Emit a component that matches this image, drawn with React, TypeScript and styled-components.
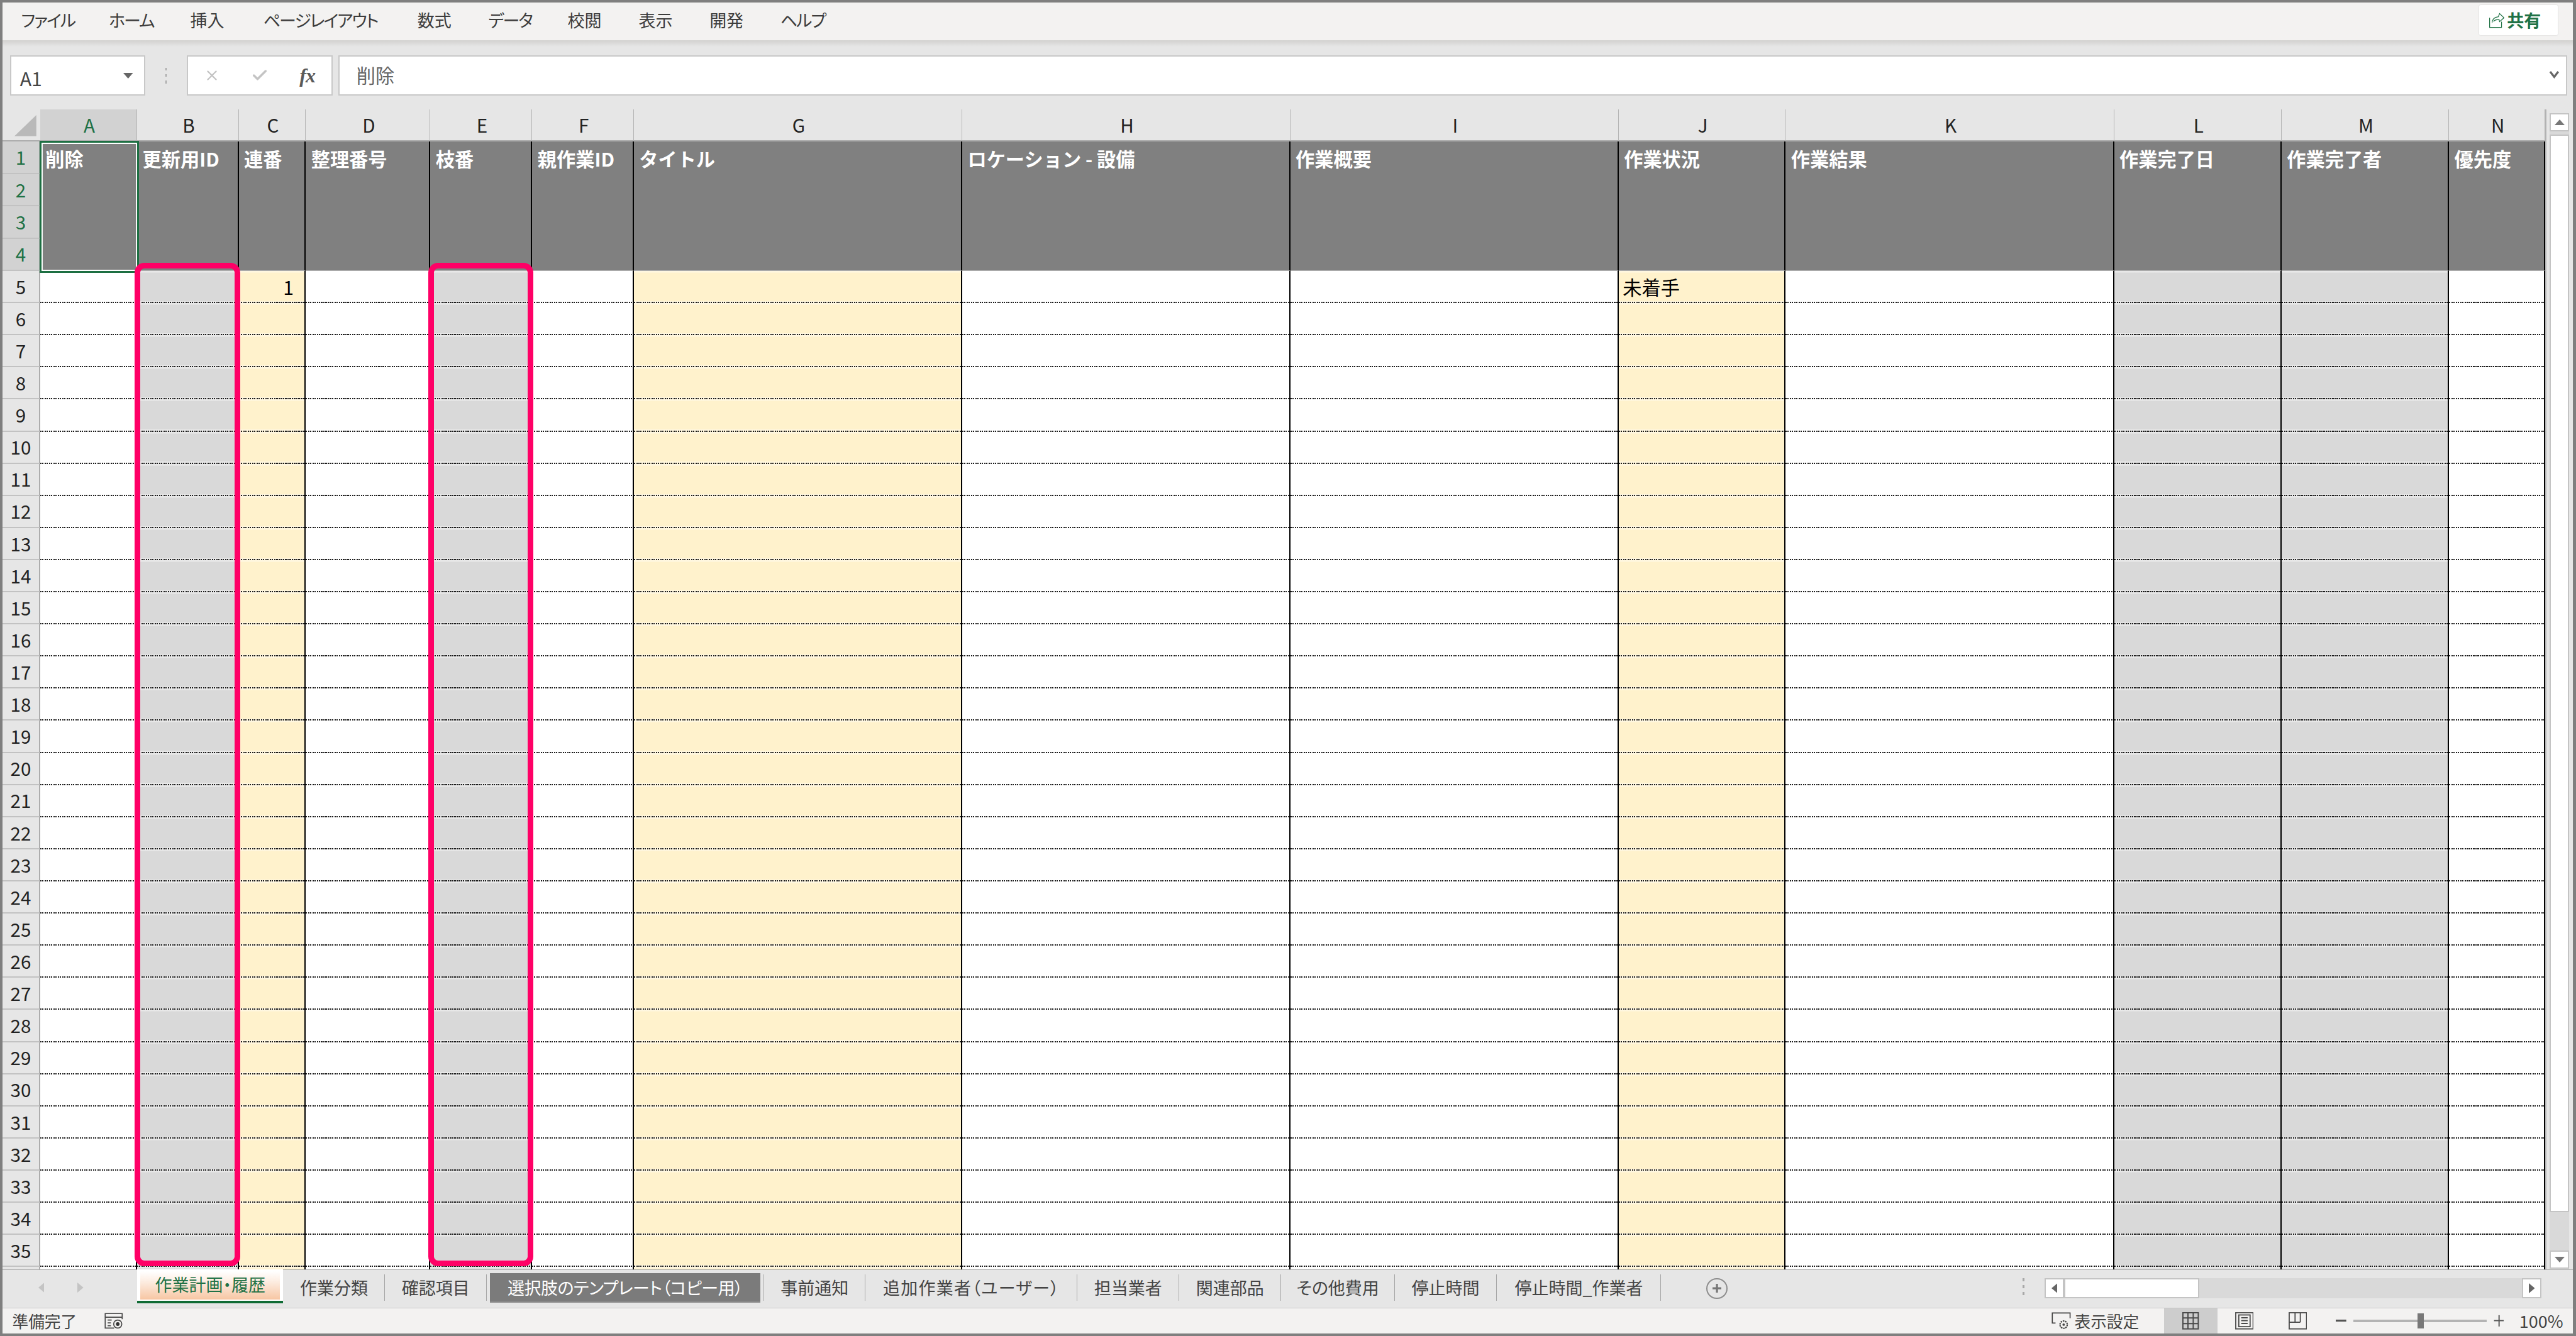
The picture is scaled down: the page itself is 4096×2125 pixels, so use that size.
import React from "react";
import styled, { createGlobalStyle } from "styled-components";
import { X, Check } from "lucide-react";

// all measurements are taken from the 6369px wide reference
const S = 4096 / 6369;
const u = (n: number) => `${(n * S).toFixed(2)}px`;

const FONT = `"Noto Sans CJK JP", "Noto Sans", sans-serif`;
const GREEN = "#1f7145";
const GRAY_CELL = "#d9d9d9";
const YELLOW_CELL = "#fff2cc";
const CHROME = "#e6e6e6";
const BAR = "#f3f2f1";

type CellKind = "white" | "gray" | "yellow";

const MENU = [
  { label: "ファイル", w: 217, kana: true },
  { label: "ホーム", w: 201, kana: true },
  { label: "挿入", w: 181 },
  { label: "ページレイアウト", w: 381, kana: true },
  { label: "数式", w: 175 },
  { label: "データ", w: 196, kana: true },
  { label: "校閲", w: 176 },
  { label: "表示", w: 175 },
  { label: "開発", w: 175 },
  { label: "ヘルプ", w: 110, kana: true },
];

const COLUMNS: { id: string; w: number; title: string; kind: CellKind }[] = [
  { id: "A", w: 240, title: "削除", kind: "white" },
  { id: "B", w: 251, title: "更新用ID", kind: "gray" },
  { id: "C", w: 166, title: "連番", kind: "yellow" },
  { id: "D", w: 308, title: "整理番号", kind: "white" },
  { id: "E", w: 252, title: "枝番", kind: "gray" },
  { id: "F", w: 251, title: "親作業ID", kind: "white" },
  { id: "G", w: 812, title: "タイトル", kind: "yellow" },
  { id: "H", w: 811, title: "ロケーション - 設備", kind: "white" },
  { id: "I", w: 812, title: "作業概要", kind: "white" },
  { id: "J", w: 413, title: "作業状況", kind: "yellow" },
  { id: "K", w: 812, title: "作業結果", kind: "white" },
  { id: "L", w: 414, title: "作業完了日", kind: "gray" },
  { id: "M", w: 414, title: "作業完了者", kind: "gray" },
  { id: "N", w: 238, title: "優先度", kind: "white" },
];

const TABS = [
  { label: "作業計画・履歴", w: 361, kind: "active", ls: 0 },
  { label: "作業分類", w: 251, kind: "plain", ls: 0 },
  { label: "確認項目", w: 252, kind: "plain", ls: 0 },
  { label: "選択肢のテンプレート（コピー用）", w: 669, kind: "dark", ls: -0.5 },
  { label: "事前通知", w: 252, kind: "plain", ls: 0 },
  { label: "追加作業者（ユーザー）", w: 523, kind: "plain", ls: 1.3 },
  { label: "担当業者", w: 252, kind: "plain", ls: 0 },
  { label: "関連部品", w: 252, kind: "plain", ls: 0 },
  { label: "その他費用", w: 281, kind: "plain", ls: 0 },
  { label: "停止時間", w: 252, kind: "plain", ls: 0 },
  { label: "停止時間_作業者", w: 407, kind: "plain", ls: 0 },
];

const cellBg = { white: "#fff", gray: GRAY_CELL, yellow: YELLOW_CELL };

const Global = createGlobalStyle`
  html, body {
    margin: 0;
    padding: 0;
    overflow: hidden;
    background: ${BAR};
  }
  * {
    box-sizing: border-box;
  }
`;

const Frame = styled.div`
  width: 4096px;
  height: 2125px;
  display: flex;
  flex-direction: column;
  border-style: solid;
  border-color: #7f7f7f;
  border-width: ${u(7)} ${u(8)} ${u(7)} ${u(7)};
  background: ${CHROME};
  font-family: ${FONT};
  font-feature-settings: "palt";
  color: #3c3c3c;
`;

const MenuBar = styled.div`
  flex: none;
  height: ${u(93)};
  display: flex;
  align-items: center;
  padding: 0 ${u(38)} ${u(6)} ${u(46)};
  background: ${BAR};
`;

const MenuItem = styled.div<{ $w: number; $kana?: boolean }>`
  width: ${(p) => u(p.$w)};
  font-size: ${u(42)};
  line-height: 1;
  white-space: nowrap;
  letter-spacing: ${(p) => (p.$kana ? "-2px" : "0")};
`;

const ShareButton = styled.div`
  margin-left: auto;
  width: ${u(193)};
  height: ${u(74)};
  display: flex;
  align-items: center;
  gap: ${u(6)};
  padding-left: ${u(22)};
  background: #fff;
  border-radius: 2px;
  box-shadow: 0 0 2px rgba(0, 0, 0, 0.18);
  color: ${GREEN};
  font-size: ${u(42)};
  font-weight: 700;
  line-height: 1;
`;

const FormulaBar = styled.div`
  flex: none;
  height: ${u(172)};
  display: flex;
  align-items: flex-start;
  padding: ${u(38)} ${u(14)} 0 ${u(18)};
  background: linear-gradient(#d2d1cf, ${CHROME} ${u(16)});
`;

const FieldBox = styled.div`
  height: ${u(99)};
  background: #fff;
  border: 2px solid #c8c8c8;
  display: flex;
  align-items: center;
`;

const NameBox = styled(FieldBox)`
  width: ${u(335)};
  padding: 0 ${u(28)} 0 ${u(22)};
  justify-content: space-between;
  font-size: ${u(47)};
  line-height: 1;
  color: #444;
`;

const NameText = styled.span`
  padding-top: ${u(14)};
`;

const BarDots = styled.div`
  width: ${u(102)};
  height: ${u(99)};
  display: flex;
  flex-direction: column;
  align-items: center;
  justify-content: center;
  gap: ${u(9)};
`;

const BarDot = styled.i`
  display: block;
  width: ${u(4)};
  height: ${u(7)};
  background: #a8a8a8;
`;

const FxBox = styled(FieldBox)`
  width: ${u(361)};
  margin-right: ${u(14)};
`;

const FxSlot = styled.div`
  flex: 1;
  display: flex;
  align-items: center;
  justify-content: center;
  color: #c4c4c4;
`;

const FxText = styled.span`
  font-family: "Liberation Serif", serif;
  font-style: italic;
  font-weight: 700;
  font-size: ${u(50)};
  line-height: 1;
  color: #5a5a5a;
  letter-spacing: -1px;
`;

const FormulaInput = styled(FieldBox)`
  flex: 1;
  padding: 0 ${u(16)} ${u(4)} ${u(42)};
  justify-content: space-between;
  font-size: ${u(47)};
  line-height: 1;
  color: #666;
`;

const Sheet = styled.div`
  flex: 1;
  min-height: 0;
  display: flex;
`;

const GridWrap = styled.div`
  position: relative;
  flex: none;
  width: ${u(6290)};
  background: #fff;
  border-right: 2px solid #b2b2b2;
`;

const GridClip = styled.div`
  height: 100%;
  overflow: hidden;
`;

const Grid = styled.div`
  display: grid;
  grid-template-columns: ${u(93)} ${COLUMNS.map((c) => u(c.w)).join(" ")};
  grid-template-rows: ${u(79)} repeat(4, ${u(80)}) repeat(32, ${u(79.47)});
`;

const Corner = styled.div`
  background: ${CHROME};
  border-bottom: 2px solid #adadad;
  display: flex;
  align-items: flex-end;
  justify-content: flex-end;
  padding: 0 ${u(9)} ${u(10)} 0;
`;

const ColumnHead = styled.div<{ $selected?: boolean }>`
  background: ${(p) => (p.$selected ? "#d2d2d2" : CHROME)};
  color: ${(p) => (p.$selected ? GREEN : "#222")};
  border-right: 1px solid #b4b4b4;
  border-bottom: 2px solid #adadad;
  display: flex;
  align-items: center;
  justify-content: center;
  padding-left: ${u(5)};
  font-size: ${u(46)};
  line-height: 1;
`;

const RowHead = styled.div<{ $selected?: boolean }>`
  background: ${(p) => (p.$selected ? "#d2d2d2" : CHROME)};
  color: ${(p) => (p.$selected ? GREEN : "#222")};
  border-right: 2px solid #adadad;
  border-bottom: 2px solid #c2c2c2;
  display: flex;
  align-items: center;
  justify-content: center;
  font-size: ${u(46)};
  line-height: 1;
`;

const TitleCell = styled.div`
  grid-row: span 4;
  background: #808080;
  border-right: 2px solid #000;
  border-bottom: 1px solid #b8b8b8;
  padding: ${u(18)} 0 0 ${u(13)};
  color: #fff;
  font-size: ${u(47)};
  font-weight: 700;
  font-feature-settings: normal;
  line-height: 1;
  white-space: nowrap;
`;

const Cell = styled.div<{ $kind: CellKind; $align?: string }>`
  border-right: 2px solid #000;
  background-color: ${(p) => cellBg[p.$kind]};
  background-image: repeating-linear-gradient(90deg, #1c1c1c 0 2px, transparent 2px 3.5px),
    linear-gradient(rgba(255, 255, 255, 0.4), rgba(255, 255, 255, 0.4)),
    linear-gradient(rgba(255, 255, 255, 0.4), rgba(255, 255, 255, 0.4));
  background-size: 100% 2px, 100% ${u(5)}, 100% ${u(4)};
  background-position: bottom, bottom, top;
  background-repeat: no-repeat;
  display: flex;
  align-items: center;
  justify-content: ${(p) => p.$align || "flex-start"};
  padding: 0 ${(p) => (p.$align ? u(27) : u(10))};
  color: #000;
  font-size: ${u(47)};
  line-height: 1;
`;

const Selection = styled.div`
  position: absolute;
  left: ${u(92)};
  top: ${u(77)};
  width: ${u(245)};
  height: ${u(327)};
  border: ${u(5)} solid #1d6f42;
  box-shadow: inset 0 0 0 ${u(3)} #fff;
`;

const Callout = styled.div<{ $left: number; $width: number }>`
  position: absolute;
  left: ${(p) => u(p.$left)};
  top: ${u(379)};
  width: ${(p) => u(p.$width)};
  height: ${u(2481)};
  border: ${u(14)} solid #ff0066;
  border-radius: ${u(24)};
`;

const VScroll = styled.div`
  flex: none;
  width: ${u(48)};
  margin: ${u(8)} 0 ${u(2)} ${u(8)};
  display: flex;
  flex-direction: column;
  background: ${GRAY_CELL};
`;

const ScrollButton = styled.div`
  background: #fff;
  border: 2px solid #c4c4c4;
  display: flex;
  align-items: center;
  justify-content: center;
  flex: none;
`;

const VButton = styled(ScrollButton)`
  height: ${u(46)};
`;

const VThumb = styled.div`
  flex: none;
  height: ${u(2666)};
  margin-top: ${u(7)};
  background: #fff;
  border: 2px solid #c4c4c4;
  margin-bottom: auto;
`;

const TabBar = styled.div`
  flex: none;
  height: ${u(94)};
  display: flex;
  align-items: flex-start;
  background: ${CHROME};
  border-top: ${u(3)} solid #adadad;
  padding-right: ${u(78)};
`;

const TabNav = styled.div`
  flex: none;
  width: ${u(333)};
  height: ${u(90)};
  display: flex;
  align-items: center;
  gap: ${u(82)};
  padding: 0 0 ${u(4)} ${u(88)};
`;

const Tab = styled.div<{ $w: number; $kind: string; $ls: number }>`
  flex: none;
  width: ${(p) => u(p.$w)};
  display: flex;
  align-items: center;
  justify-content: center;
  font-size: ${u(42)};
  line-height: 1;
  white-space: nowrap;
  letter-spacing: ${(p) => p.$ls}px;
  ${(p) =>
    p.$kind === "active"
      ? `
    height: ${u(85)};
    margin-top: -${u(3)};
    padding: 0 ${u(8)} ${u(3)};
    border-bottom: ${u(7)} solid #0f6b35;
    background: linear-gradient(#fff 8%, #fdeee3 40%, #f7c6a3 100%) content-box, #fff;
    color: ${GREEN};
  `
      : p.$kind === "dark"
        ? `
    height: ${u(73)};
    margin: ${u(7)} ${u(8)} 0;
    background: #7b7b7b;
    color: #fff;
    border-bottom: 2px solid #8c8c8c;
  `
        : `
    height: ${u(66)};
    margin-top: ${u(9)};
    color: #444;
  `}
`;

const TabSep = styled.div`
  flex: none;
  width: 1px;
  margin-left: -1px;
  height: ${u(66)};
  margin-top: ${u(10)};
  background: #a6a6a6;
`;

const AddSheet = styled.div`
  flex: none;
  width: ${u(52)};
  height: ${u(52)};
  margin: ${u(19)} 0 0 ${u(112)};
  border-radius: 50%;
  border: 2px solid #8e8e8e;
  color: #767676;
  display: flex;
  align-items: center;
  justify-content: center;
`;

const SplitDots = styled.div`
  flex: none;
  margin: ${u(20)} ${u(50)} 0 auto;
  display: flex;
  flex-direction: column;
  gap: ${u(10)};
`;

const HScroll = styled.div`
  flex: none;
  width: ${u(1228)};
  height: ${u(50)};
  margin-top: ${u(20)};
  display: flex;
  background: ${GRAY_CELL};
`;

const HButton = styled(ScrollButton)`
  width: ${u(48)};
`;

const HThumb = styled.div`
  flex: none;
  width: ${u(334)};
  margin-right: auto;
  background: #fff;
  border: 2px solid #c4c4c4;
`;

const StatusBar = styled.div`
  flex: none;
  height: ${u(64)};
  display: flex;
  align-items: center;
  padding-left: ${u(24)};
  padding-right: ${u(24)};
  background: ${BAR};
  border-top: ${u(3)} solid #c6c6c6;
  font-size: ${u(40)};
  line-height: 1;
  color: #444;
`;

const MacroIcon = styled.svg`
  margin-left: ${u(68)};
  width: ${u(47)};
  height: ${u(40)};
`;

const StatusRight = styled.div`
  margin-left: auto;
  height: 100%;
  display: flex;
  align-items: center;
`;

const DisplaySettings = styled.div`
  display: flex;
  align-items: center;
  gap: ${u(9)};
  margin-right: ${u(62)};
`;

const ViewButton = styled.div<{ $on?: boolean }>`
  width: ${u(132)};
  height: 100%;
  display: flex;
  align-items: center;
  justify-content: center;
  background: ${(p) => (p.$on ? "#cdcdcd" : "transparent")};
`;

const ZoomSign = styled.svg`
  width: ${u(26)};
  height: ${u(40)};
  color: #555;
`;

const ZoomMinus = styled(ZoomSign)`
  margin-left: ${u(28)};
`;

const ZoomTrack = styled.div`
  position: relative;
  width: ${u(330)};
  height: ${u(5)};
  margin: 0 ${u(17)} 0 ${u(18)};
  background: #b4b4b4;
`;

const ZoomThumb = styled.div`
  position: absolute;
  left: ${u(158)};
  top: ${u(-16)};
  width: ${u(16)};
  height: ${u(37)};
  background: #787878;
`;

const ZoomLabel = styled.div`
  margin-left: ${u(37)};
  font-size: ${u(42)};
`;

const Tri: React.FC<{ dir: "up" | "down" | "left" | "right"; w: number; h: number; color: string }> = ({
  dir,
  w,
  h,
  color,
}) => {
  const points = {
    up: "5,0 10,10 0,10",
    down: "0,0 10,0 5,10",
    left: "10,0 10,10 0,5",
    right: "0,0 10,5 0,10",
  }[dir];
  return (
    <svg width={w * S} height={h * S} viewBox="0 0 10 10" preserveAspectRatio="none">
      <polygon points={points} fill={color} />
    </svg>
  );
};

const ShareIcon = () => (
  <svg width={40 * S} height={40 * S} viewBox="65 55 125 125" fill="none" stroke={GREEN} strokeWidth="6">
    <path d="M73 100V175H165V130" />
    <path d="M92 138C94 112 112 95 140 92L150 68L184 100L150 130L146 114C130 112 112 118 102 128" />
  </svg>
);

const SettingsIcon = () => (
  <svg width={48 * S} height={44 * S} viewBox="0 0 48 44" fill="none" stroke="#444" strokeWidth="2.6">
    <path d="M10 27H2V2H46V15" />
    <circle cx="30" cy="31" r="9" strokeDasharray="4 1.6" strokeWidth="3.4" />
    <circle cx="30" cy="31" r="3" fill="#444" stroke="none" />
  </svg>
);

const NormalIcon = () => (
  <svg width={41 * S} height={43 * S} viewBox="0 0 41 43" fill="none" stroke="#4a4a4a" strokeWidth="3">
    <rect x="1.5" y="1.5" width="38" height="40" />
    <path d="M14 1.5V41.5M27 1.5V41.5M1.5 14.5H39.5M1.5 28.5H39.5" />
  </svg>
);

const PageIcon = () => (
  <svg width={46 * S} height={43 * S} viewBox="0 0 46 43" fill="none" stroke="#4a4a4a" strokeWidth="2.8">
    <rect x="1.5" y="1.5" width="43" height="40" />
    <rect x="9" y="7" width="28" height="29" />
    <path d="M15 14H31M15 21H31M15 28H31" />
  </svg>
);

const BreakIcon = () => (
  <svg width={46 * S} height={43 * S} viewBox="0 0 46 43" fill="none" stroke="#4a4a4a" strokeWidth="2.8">
    <rect x="1.5" y="1.5" width="43" height="40" />
    <path d="M16 1.5V25M29 1.5V25M1.5 25H29" />
  </svg>
);

const App: React.FC = () => {
  const rows = Array.from({ length: 32 }, (_, i) => i + 5);
  return (
    <Frame>
      <Global />
      <MenuBar>
        {MENU.map((m) => (
          <MenuItem key={m.label} $w={m.w} $kana={m.kana}>
            {m.label}
          </MenuItem>
        ))}
        <ShareButton>
          <ShareIcon />
          共有
        </ShareButton>
      </MenuBar>

      <FormulaBar>
        <NameBox>
          <NameText>A1</NameText>
          <Tri dir="down" w={24} h={14} color="#666" />
        </NameBox>
        <BarDots>
          <BarDot />
          <BarDot />
          <BarDot />
        </BarDots>
        <FxBox>
          <FxSlot>
            <X size={26} strokeWidth={2.2} />
          </FxSlot>
          <FxSlot>
            <Check size={28} strokeWidth={3} />
          </FxSlot>
          <FxSlot>
            <FxText>fx</FxText>
          </FxSlot>
        </FxBox>
        <FormulaInput>
          削除
          <svg width={26 * S} height={20 * S} viewBox="0 0 26 20" fill="none" stroke="#666" strokeWidth="5">
            <path d="M3 3L13 16L23 3" />
          </svg>
        </FormulaInput>
      </FormulaBar>

      <Sheet>
        <GridWrap>
          <GridClip>
            <Grid>
              <Corner>
                <svg width={54 * S} height={52 * S} viewBox="0 0 54 52">
                  <polygon points="54,0 54,52 0,52" fill="#b9b9b9" />
                </svg>
              </Corner>
              {COLUMNS.map((c, i) => (
                <ColumnHead key={c.id} $selected={i === 0}>
                  {c.id}
                </ColumnHead>
              ))}
              <RowHead $selected>1</RowHead>
              {COLUMNS.map((c) => (
                <TitleCell key={c.id}>{c.title}</TitleCell>
              ))}
              <RowHead $selected>2</RowHead>
              <RowHead $selected>3</RowHead>
              <RowHead $selected>4</RowHead>
              {rows.map((r) => (
                <React.Fragment key={r}>
                  {/* row 36 only peeks out by a few pixels, so no number on it */}
                  <RowHead>{r < 36 ? r : ""}</RowHead>
                  {COLUMNS.map((c) => {
                    const isSerial = r === 5 && c.id === "C";
                    return (
                      <Cell key={c.id} $kind={c.kind} $align={isSerial ? "flex-end" : undefined}>
                        {isSerial && "1"}
                        {r === 5 && c.id === "J" && "未着手"}
                      </Cell>
                    );
                  })}
                </React.Fragment>
              ))}
            </Grid>
          </GridClip>
          <Selection />
          <Callout $left={326} $width={261} />
          <Callout $left={1052} $width={260} />
        </GridWrap>
        <VScroll>
          <VButton>
            <Tri dir="up" w={25} h={14} color="#777" />
          </VButton>
          <VThumb />
          <VButton>
            <Tri dir="down" w={25} h={14} color="#777" />
          </VButton>
        </VScroll>
      </Sheet>

      <TabBar>
        <TabNav>
          <Tri dir="left" w={15} h={25} color="#c4c4c4" />
          <Tri dir="right" w={15} h={25} color="#c4c4c4" />
        </TabNav>
        {TABS.map((t, i) => (
          <React.Fragment key={t.label}>
            <Tab $w={t.w} $kind={t.kind} $ls={t.ls}>
              {t.label}
            </Tab>
            {i > 0 && <TabSep />}
          </React.Fragment>
        ))}
        <AddSheet>
          <svg width={22 * S} height={22 * S} viewBox="0 0 22 22" stroke="currentColor" strokeWidth="5">
            <path d="M11 0V22M0 11H22" />
          </svg>
        </AddSheet>
        <SplitDots>
          <BarDot />
          <BarDot />
          <BarDot />
        </SplitDots>
        <HScroll>
          <HButton>
            <Tri dir="left" w={15} h={25} color="#666" />
          </HButton>
          <HThumb />
          <HButton>
            <Tri dir="right" w={15} h={25} color="#666" />
          </HButton>
        </HScroll>
      </TabBar>

      <StatusBar>
        準備完了
        <MacroIcon viewBox="0 0 47 40" fill="none" stroke="#4a4a4a" strokeWidth="2.6">
          <path d="M24 38H2V2H44V16M2 11H44M8 18H18M8 25H16M8 32H16" />
          <circle cx="33" cy="28" r="10" />
          <circle cx="33" cy="28" r="4.5" fill="#333" stroke="none" />
        </MacroIcon>
        <StatusRight>
          <DisplaySettings>
            <SettingsIcon />
            表示設定
          </DisplaySettings>
          <ViewButton $on>
            <NormalIcon />
          </ViewButton>
          <ViewButton>
            <PageIcon />
          </ViewButton>
          <ViewButton>
            <BreakIcon />
          </ViewButton>
          <ZoomMinus viewBox="0 0 26 40">
            <rect x="0" y="17" width="26" height="5" fill="currentColor" />
          </ZoomMinus>
          <ZoomTrack>
            <ZoomThumb />
          </ZoomTrack>
          <ZoomSign viewBox="0 0 26 40">
            <rect x="1" y="18" width="24" height="3" fill="currentColor" />
            <rect x="12" y="6" width="3" height="28" fill="currentColor" />
          </ZoomSign>
          <ZoomLabel>100%</ZoomLabel>
        </StatusRight>
      </StatusBar>
    </Frame>
  );
};

export default App;
